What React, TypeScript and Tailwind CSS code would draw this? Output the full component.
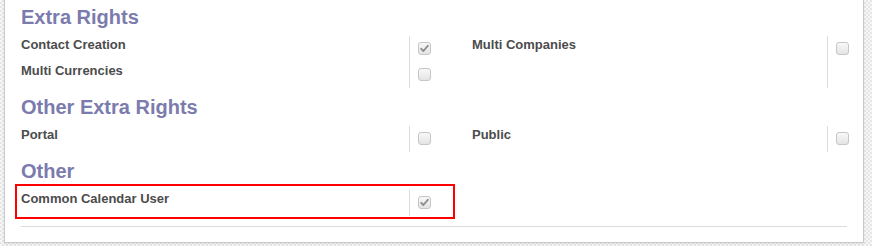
import React from "react";

function Box({ checked }: { checked?: boolean }) {
  return (
    <div className="mt-[6px] ml-[8px] flex h-[13px] w-[13px] items-center justify-center rounded-[3px] border border-[#c6c6c6] bg-gradient-to-b from-[#f8f8f8] to-[#e4e4e4]">
      {checked && (
        <svg width="9" height="9" viewBox="0 0 9 9">
          <path d="M1.2 4.8 L3.4 7 L7.8 1.8" fill="none" stroke="#8f8f8f" strokeWidth="1.9" strokeLinecap="round" strokeLinejoin="round" />
        </svg>
      )}
    </div>
  );
}

function Field({ label, checked, labelW }: { label: string; checked?: boolean; labelW: string }) {
  return (
    <div className="flex h-[26px]">
      <div className={`${labelW} pt-[1px] text-[13px] leading-[16px] font-bold text-[#4c4c4c]`}>{label}</div>
      <div className="w-px bg-[#dcdcdc]" />
      <Box checked={checked} />
    </div>
  );
}

function Heading({ children, top }: { children: React.ReactNode; top: string }) {
  return (
    <h2 className={`${top} mb-[8px] text-[20px] leading-[22px] font-bold text-[#7c7bad]`}>{children}</h2>
  );
}

export default function App() {
  return (
    <div
      className="h-[246px] w-[872px] overflow-hidden bg-[repeating-conic-gradient(#e6e6e6_0_25%,#f7f7f7_0_50%)] bg-[length:4px_4px]"
      style={{ fontFamily: '"Liberation Sans", Arial, sans-serif' }}
    >
      <div className="ml-[4px] h-[243px] w-[860px] border-x border-b border-[#c9c9c9] bg-white pl-[16px] shadow-[0_1px_2px_rgba(0,0,0,0.08)]">
        <Heading top="pt-[6px]">Extra Rights</Heading>
        <div className="flex">
          <div className="w-[451px]">
            <Field label="Contact Creation" checked labelW="w-[388px]" />
            <Field label="Multi Currencies" labelW="w-[388px]" />
          </div>
          <div className="w-[377px]">
            <div className="flex h-[52px]">
              <div className="w-[356px] pt-[1px] text-[13px] leading-[16px] font-bold text-[#4c4c4c]">Multi Companies</div>
              <div className="w-px bg-[#dcdcdc]" />
              <Box />
            </div>
          </div>
        </div>

        <Heading top="mt-[8px]">Other Extra Rights</Heading>
        <div className="flex">
          <div className="w-[451px]">
            <Field label="Portal" labelW="w-[388px]" />
          </div>
          <div className="w-[377px]">
            <Field label="Public" labelW="w-[356px]" />
          </div>
        </div>

        <Heading top="mt-[8px]">Other</Heading>
        <div className="-mt-[6px] -ml-[6px] w-[440px] border-2 border-[#ff0000] pt-[4px] pb-[1px] pl-[4px]">
          <Field label="Common Calendar User" checked labelW="w-[388px]" />
        </div>
        <div className="mt-[7px] h-px w-[826px] bg-[#dcdcdc]" />
      </div>
    </div>
  );
}
